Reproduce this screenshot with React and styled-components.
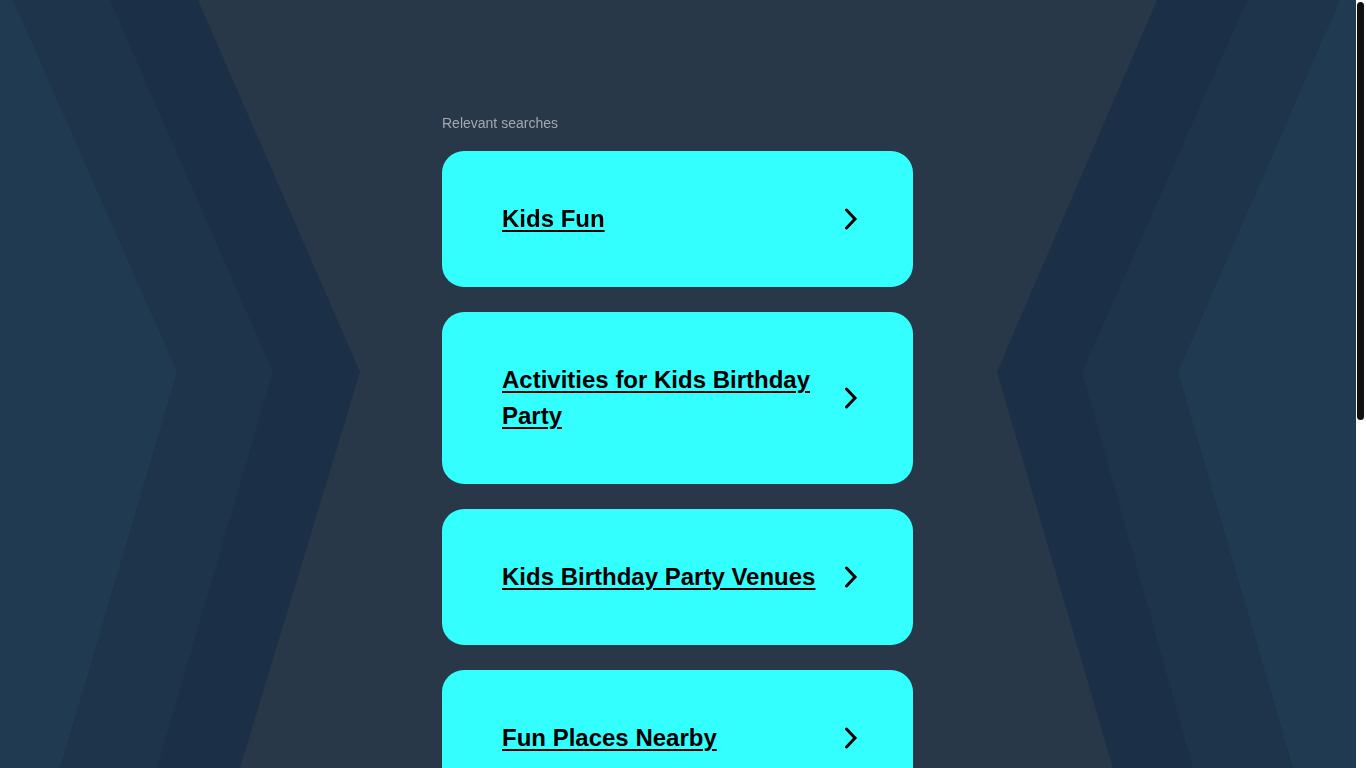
import styled, { createGlobalStyle } from "styled-components";

const GlobalStyle = createGlobalStyle`
  html, body {
    margin: 0;
    padding: 0;
    background: #283848;
  }
  body {
    font-family: "Liberation Sans", Arial, sans-serif;
  }
`;

const Backdrop = styled.svg`
  position: fixed;
  top: 0;
  left: 0;
  width: calc(100% - 10px);
  height: 100vh;
  z-index: 0;
`;

const ScrollTrack = styled.div`
  position: fixed;
  top: 0;
  right: 0;
  width: 10px;
  height: 100vh;
  background: #ffffff;
  z-index: 5;
`;

const ScrollThumb = styled.div`
  margin: 2px 2px 0 1px;
  height: 418px;
  background: #111111;
  border-radius: 4px;
`;

const Page = styled.main`
  position: relative;
  z-index: 1;
  padding: 114px 11px 443px 0;
`;

const Column = styled.section`
  width: 471px;
  margin: 0 auto;
  display: flex;
  flex-direction: column;
`;

const Heading = styled.h2`
  margin: 0 0 19px;
  font-size: 14px;
  font-weight: normal;
  line-height: 18px;
  color: #a3a9b0;
`;

const List = styled.div`
  display: flex;
  flex-direction: column;
  gap: 25px;
`;

const Card = styled.a`
  display: flex;
  align-items: center;
  justify-content: space-between;
  padding: 50px 55px 50px 60px;
  background: #33ffff;
  border-radius: 22px;
  color: #000;
  text-decoration: none;
`;

const Title = styled.span`
  flex: 1;
  font-size: 24px;
  font-weight: bold;
  line-height: 36px;
  text-decoration: underline;
  text-decoration-thickness: 2px;
  text-underline-offset: 3px;
  padding-right: 15px;
`;

const Arrow = styled.svg`
  flex: none;
  width: 14px;
  height: 22px;
`;

const searches = [
  "Kids Fun",
  "Activities for Kids Birthday Party",
  "Kids Birthday Party Venues",
  "Fun Places Nearby",
  "Kids Party Ideas",
];

const Chevron = () => (
  <Arrow viewBox="0 0 14 22">
    <polyline
      points="2.5,2 11,11 2.5,20"
      fill="none"
      stroke="#000"
      strokeWidth="3"
      strokeLinecap="round"
      strokeLinejoin="miter"
    />
  </Arrow>
);

const Background = () => (
  <Backdrop viewBox="0 0 1356 768" preserveAspectRatio="none">
    <polygon points="0,0 198,0 360,372 240,768 0,768" fill="#1b3046" />
    <polygon points="0,0 110,0 273,372 157,768 0,768" fill="#1e344b" />
    <polygon points="0,0 13,0 177,372 60,768 0,768" fill="#203a52" />
    <polygon points="1356,0 1157,0 997,372 1113,768 1356,768" fill="#1b3046" />
    <polygon points="1356,0 1247,0 1082,372 1193,768 1356,768" fill="#1e344b" />
    <polygon points="1356,0 1340,0 1178,372 1293,768 1356,768" fill="#203a52" />
  </Backdrop>
);

export default function App() {
  return (
    <>
      <GlobalStyle />
      <Background />
      <Page>
        <Column>
          <Heading>Relevant searches</Heading>
          <List>
            {searches.map((s) => (
              <Card href="#" key={s}>
                <Title>{s}</Title>
                <Chevron />
              </Card>
            ))}
          </List>
        </Column>
      </Page>
      <ScrollTrack>
        <ScrollThumb />
      </ScrollTrack>
    </>
  );
}
